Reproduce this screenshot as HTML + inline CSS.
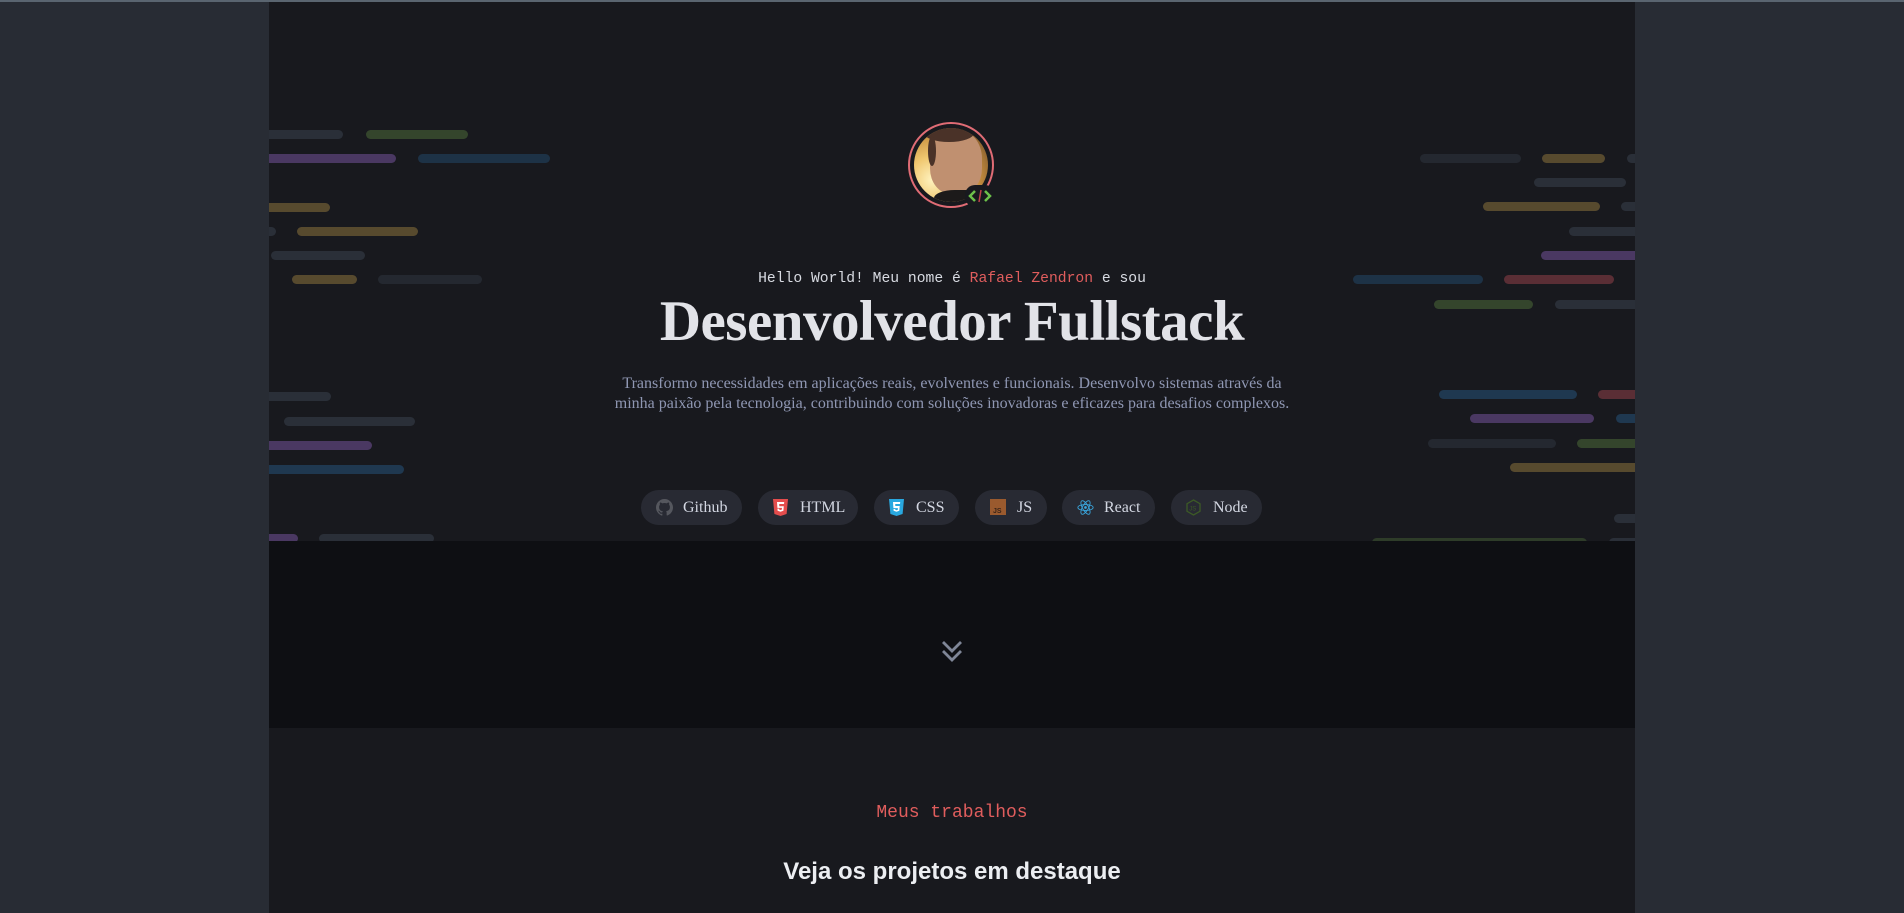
<!DOCTYPE html>
<html><head><meta charset="utf-8"><style>
*{margin:0;padding:0;box-sizing:border-box}
body{width:1904px;height:913px;background:#282c34;overflow:hidden;position:relative;font-family:"Liberation Serif",serif}
.top{position:absolute;left:0;top:0;width:1904px;height:2px;background:#5a6570}
.main{position:absolute;left:269px;top:2px;width:1366px;height:911px;background:#18191e;overflow:hidden}
.dark{position:absolute;left:0;top:539px;width:1366px;height:187px;background:#0e0f13}
.bar{position:absolute;height:9px;border-radius:5px}
.g{background:#2a2f38}.gr{background:#34452c}.p{background:#4a3862}.b{background:#1f3850}.y{background:#574a2e}.r{background:#5a2e35}
.c{position:absolute;left:0;width:1366px;text-align:center}
.btn{position:absolute;top:488px;height:35px;border-radius:18px;background:#282a33;color:#d3d7e2;font-size:16px;line-height:35px;padding-left:42px}
.btn svg{position:absolute;left:15px;top:9px}
</style></head><body>
<div class="top"></div>
<div class="main">
<div class="bar g" style="left:-10px;top:128px;width:84px"></div>
<div class="bar gr" style="left:97px;top:128px;width:102px"></div>
<div class="bar p" style="left:-10px;top:152px;width:137px"></div>
<div class="bar b" style="left:149px;top:152px;width:132px;opacity:.8"></div>
<div class="bar y" style="left:-10px;top:201px;width:71px"></div>
<div class="bar g" style="left:-10px;top:225px;width:17px"></div>
<div class="bar y" style="left:28px;top:225px;width:121px"></div>
<div class="bar g" style="left:2px;top:249px;width:94px"></div>
<div class="bar y" style="left:23px;top:273px;width:65px"></div>
<div class="bar g" style="left:109px;top:273px;width:104px;opacity:.7"></div>
<div class="bar g" style="left:-10px;top:390px;width:72px"></div>
<div class="bar g" style="left:15px;top:415px;width:131px"></div>
<div class="bar p" style="left:-10px;top:439px;width:113px"></div>
<div class="bar b" style="left:-10px;top:463px;width:145px"></div>
<div class="bar p" style="left:-10px;top:532px;width:39px"></div>
<div class="bar g" style="left:50px;top:532px;width:115px"></div>
<div class="bar g" style="left:1151px;top:152px;width:101px;opacity:.7"></div>
<div class="bar y" style="left:1273px;top:152px;width:63px"></div>
<div class="bar g" style="left:1358px;top:152px;width:20px"></div>
<div class="bar g" style="left:1265px;top:176px;width:92px"></div>
<div class="bar y" style="left:1214px;top:200px;width:117px"></div>
<div class="bar g" style="left:1352px;top:200px;width:20px"></div>
<div class="bar g" style="left:1300px;top:225px;width:80px"></div>
<div class="bar p" style="left:1272px;top:249px;width:100px"></div>
<div class="bar b" style="left:1084px;top:273px;width:130px;opacity:.8"></div>
<div class="bar r" style="left:1235px;top:273px;width:110px"></div>
<div class="bar gr" style="left:1165px;top:298px;width:99px"></div>
<div class="bar g" style="left:1286px;top:298px;width:90px"></div>
<div class="bar b" style="left:1170px;top:388px;width:138px"></div>
<div class="bar r" style="left:1329px;top:388px;width:50px"></div>
<div class="bar p" style="left:1201px;top:412px;width:124px"></div>
<div class="bar b" style="left:1347px;top:412px;width:30px"></div>
<div class="bar g" style="left:1159px;top:437px;width:128px;opacity:.7"></div>
<div class="bar gr" style="left:1308px;top:437px;width:70px"></div>
<div class="bar y" style="left:1241px;top:461px;width:135px"></div>
<div class="bar g" style="left:1345px;top:512px;width:30px"></div>
<div class="bar gr" style="left:1103px;top:536px;width:215px;opacity:.8"></div>
<div class="bar g" style="left:1340px;top:536px;width:30px"></div>

<div class="dark"></div>

<div style="position:absolute;left:639px;top:120px;width:86px;height:86px;border-radius:50%;border:2px solid #e06c75;background:#18191e"></div>
<div style="position:absolute;left:645px;top:126px;width:74px;height:74px;border-radius:50%;overflow:hidden;background:radial-gradient(circle at 25% 70%,#fff3c0 0,#f0c870 30%,#c89040 60%,#5a3a22 100%)">
<div style="position:absolute;left:16px;top:2px;width:52px;height:64px;border-radius:45% 45% 40% 40%;background:#c09070"></div>
<div style="position:absolute;left:10px;top:-4px;width:50px;height:18px;border-radius:50%;background:#4a3228"></div>
<div style="position:absolute;left:14px;top:8px;width:8px;height:30px;border-radius:50%;background:#4a3228"></div>
<div style="position:absolute;left:20px;top:62px;width:52px;height:20px;background:#1c1a1a;border-radius:40% 40% 0 0"></div>
</div>
<div style="position:absolute;left:696px;top:183px;width:30px;height:22px;border-radius:10px;background:#18191e"></div>
<svg style="position:absolute;left:698px;top:186px" width="26" height="16" viewBox="0 0 26 16"><path d="M8 3 L3 8 L8 13 M18 3 L23 8 L18 13" stroke="#6cc04a" stroke-width="2.5" fill="none"/><path d="M14 2 L12 14" stroke="#c0404a" stroke-width="1.5"/></svg>

<div class="c" style="top:269px;font-family:'Liberation Mono',monospace;font-size:14.7px;color:#d8dbe2">Hello World! Meu nome é <span style="color:#e05d5d">Rafael Zendron</span> e sou</div>
<div class="c" style="top:287px;font-size:57px;font-weight:bold;color:#e2e3e8;letter-spacing:-0.5px">Desenvolvedor Fullstack</div>
<div class="c" style="top:372px;font-size:16px;line-height:20px;color:#8f97b3;left:340px;width:686px">Transformo necessidades em aplicações reais, evolventes e funcionais. Desenvolvo sistemas através da minha paixão pela tecnologia, contribuindo com soluções inovadoras e eficazes para desafios complexos.</div>

<div class="btn" style="left:372px;width:101px">Github<svg width="17" height="17" viewBox="0 0 16 16"><path fill="#55575e" d="M8 0C3.6 0 0 3.6 0 8c0 3.5 2.3 6.5 5.5 7.6.4.1.5-.2.5-.4v-1.4c-2.2.5-2.7-1-2.7-1-.4-.9-.9-1.200-.9-1.2-.7-.5.1-.5.1-.5.8.1 1.2.8 1.2.8.7 1.2 1.9.9 2.3.7.1-.5.3-.9.5-1.1-1.8-.2-3.6-.9-3.6-4 0-.9.3-1.6.8-2.100-.1-.2-.4-1 .1-2.100 0 0 .7-.2 2.2.8.6-.2 1.3-.3 2-.3s1.4.1 2 .3c1.5-1 2.2-.8 2.2-.8.4 1.1.2 1.9.1 2.1.5.6.8 1.3.8 2.1 0 3.1-1.9 3.7-3.6 3.9.3.3.5.8.5 1.5v2.2c0 .2.1.5.6.4C13.7 14.5 16 11.5 16 8c0-4.4-3.6-8-8-8z"/></svg></div>
<div class="btn" style="left:489px;width:100px">HTML<svg width="15" height="17" viewBox="0 0 15 17"><path fill="#e44d4d" d="M0 0h15l-1.4 15L7.5 17 1.4 15z"/><path fill="#fff" d="M4 3h7.2l-.2 2H6.2l.1 2.2h4.5l-.4 4.6-2.9.9-2.9-.9-.2-2.2h1.7l.1 1 1.3.4 1.3-.4.2-1.7H4.4z"/></svg></div>
<div class="btn" style="left:605px;width:85px">CSS<svg width="15" height="17" viewBox="0 0 15 17"><path fill="#29a8e0" d="M0 0h15l-1.4 15L7.5 17 1.4 15z"/><path fill="#fff" d="M4 3h7.2l-.2 2H6.2l.1 2h4.4l-.4 4.8-2.8.9-2.9-.9-.1-1.8h1.7l.1.8 1.2.4 1.3-.4.1-1.7H4.4z"/></svg></div>
<div class="btn" style="left:706px;width:72px">JS<svg width="16" height="16" viewBox="0 0 16 16"><rect width="16" height="16" fill="#9a5a2e"/><text x="3" y="14" font-size="7" font-family="Liberation Sans" font-weight="bold" fill="#3a2418">JS</text></svg></div>
<div class="btn" style="left:793px;width:93px">React<svg width="17" height="17" viewBox="-10 -10 20 20"><g stroke="#3aa8e0" stroke-width="1" fill="none"><ellipse rx="9" ry="3.5"/><ellipse rx="9" ry="3.5" transform="rotate(60)"/><ellipse rx="9" ry="3.5" transform="rotate(120)"/></g><circle r="1.6" fill="#3aa8e0"/></svg></div>
<div class="btn" style="left:902px;width:91px">Node<svg width="15" height="17" viewBox="0 0 15 17"><path d="M7.5 1 L14 4.7 V12.3 L7.5 16 L1 12.3 V4.7Z" fill="none" stroke="#3c5a26" stroke-width="1.3"/><text x="3.3" y="11.5" font-size="6" font-family="Liberation Sans" fill="#3c5a26">JS</text></svg></div>

<svg style="position:absolute;left:671px;top:637px" width="24" height="26" viewBox="0 0 24 26"><path d="M3 3 L12 12 L21 3 M3 12 L12 21 L21 12" stroke="#7f8697" stroke-width="2.8" fill="none"/></svg>

<div class="c" style="top:801px;font-family:'Liberation Mono',monospace;font-size:18px;color:#e05d5d">Meus trabalhos</div>
<div class="c" style="top:856px;font-family:'Liberation Sans',sans-serif;font-size:24px;font-weight:bold;color:#eceef2">Veja os projetos em destaque</div>
</div>
</body></html>
